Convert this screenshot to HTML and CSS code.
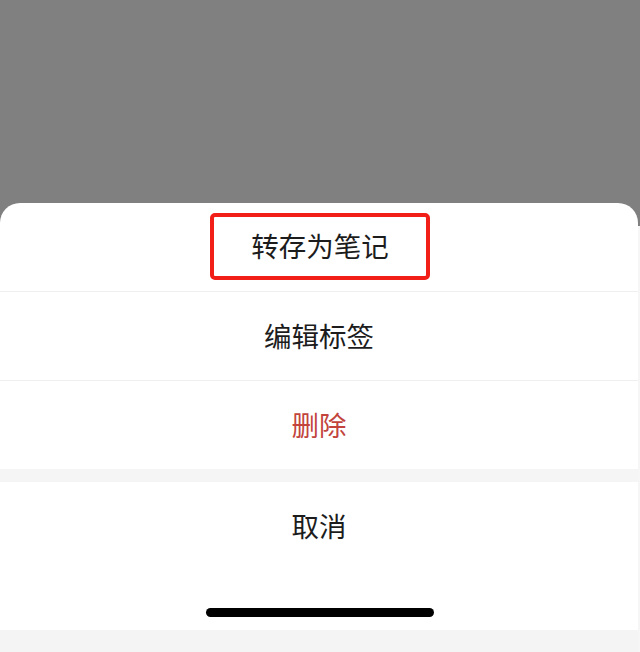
FILE: index.html
```html
<!DOCTYPE html>
<html lang="zh-CN">
<head>
<meta charset="utf-8">
<title>操作菜单</title>
<link rel="stylesheet" href="styles.css">
</head>
<body>
  <div class="screen">
    <div class="backdrop"></div>
    <div class="sheet">
      <ul class="actions">
        <li class="action">
          <span class="highlight">转存为笔记</span>
        </li>
        <li class="action">编辑标签</li>
        <li class="action danger">删除</li>
      </ul>
      <div class="spacer"></div>
      <div class="cancel">
        <div class="action cancel-label">取消</div>
        <div class="home-area">
          <div class="home-indicator"></div>
        </div>
      </div>
      <div class="footer"></div>
    </div>
  </div>
</body>
</html>
```

FILE: styles.css
```css
* {
  box-sizing: border-box;
}

html,
body {
  margin: 0;
  padding: 0;
  height: 652px;
  overflow: hidden;
}

body {
  background: linear-gradient(#808080 0, #808080 226px, #f6f6f6 226px);
  font-family: "Noto Sans CJK SC", "Noto Sans", sans-serif;
  color: #1c1c1c;
}

.screen {
  display: flex;
  flex-direction: column;
  height: 652px;
}

.backdrop {
  height: 203px;
  flex: none;
}

.sheet {
  flex: 1;
  display: flex;
  flex-direction: column;
  margin-right: 2px;
  background: #ffffff;
  border-radius: 20px 20px 0 0;
  overflow: hidden;
}

.actions {
  list-style: none;
  margin: 0;
  padding: 0;
}

.action {
  height: 88px;
  display: flex;
  align-items: center;
  justify-content: center;
  font-size: 27.5px;
  line-height: 1;
}

.actions .action + .action {
  border-top: 1px solid #efefef;
  height: 89px;
}

.danger {
  color: #c2443d;
}

.highlight {
  display: flex;
  align-items: center;
  justify-content: center;
  width: 220px;
  height: 67px;
  margin-top: -2px;
  margin-left: 2px;
  border: 4px solid #f21f19;
  border-radius: 5px;
}

.spacer {
  height: 13px;
  background: #f5f5f5;
}

.cancel {
  display: flex;
  flex-direction: column;
}

.cancel-label {
  height: 87px;
}

.home-area {
  height: 61px;
  display: flex;
  justify-content: center;
  padding-top: 39px;
  padding-left: 2px;
}

.home-indicator {
  width: 228px;
  height: 9px;
  border-radius: 5px;
  background: #000000;
}

.footer {
  flex: 1;
  background: #f4f4f4;
}
```
